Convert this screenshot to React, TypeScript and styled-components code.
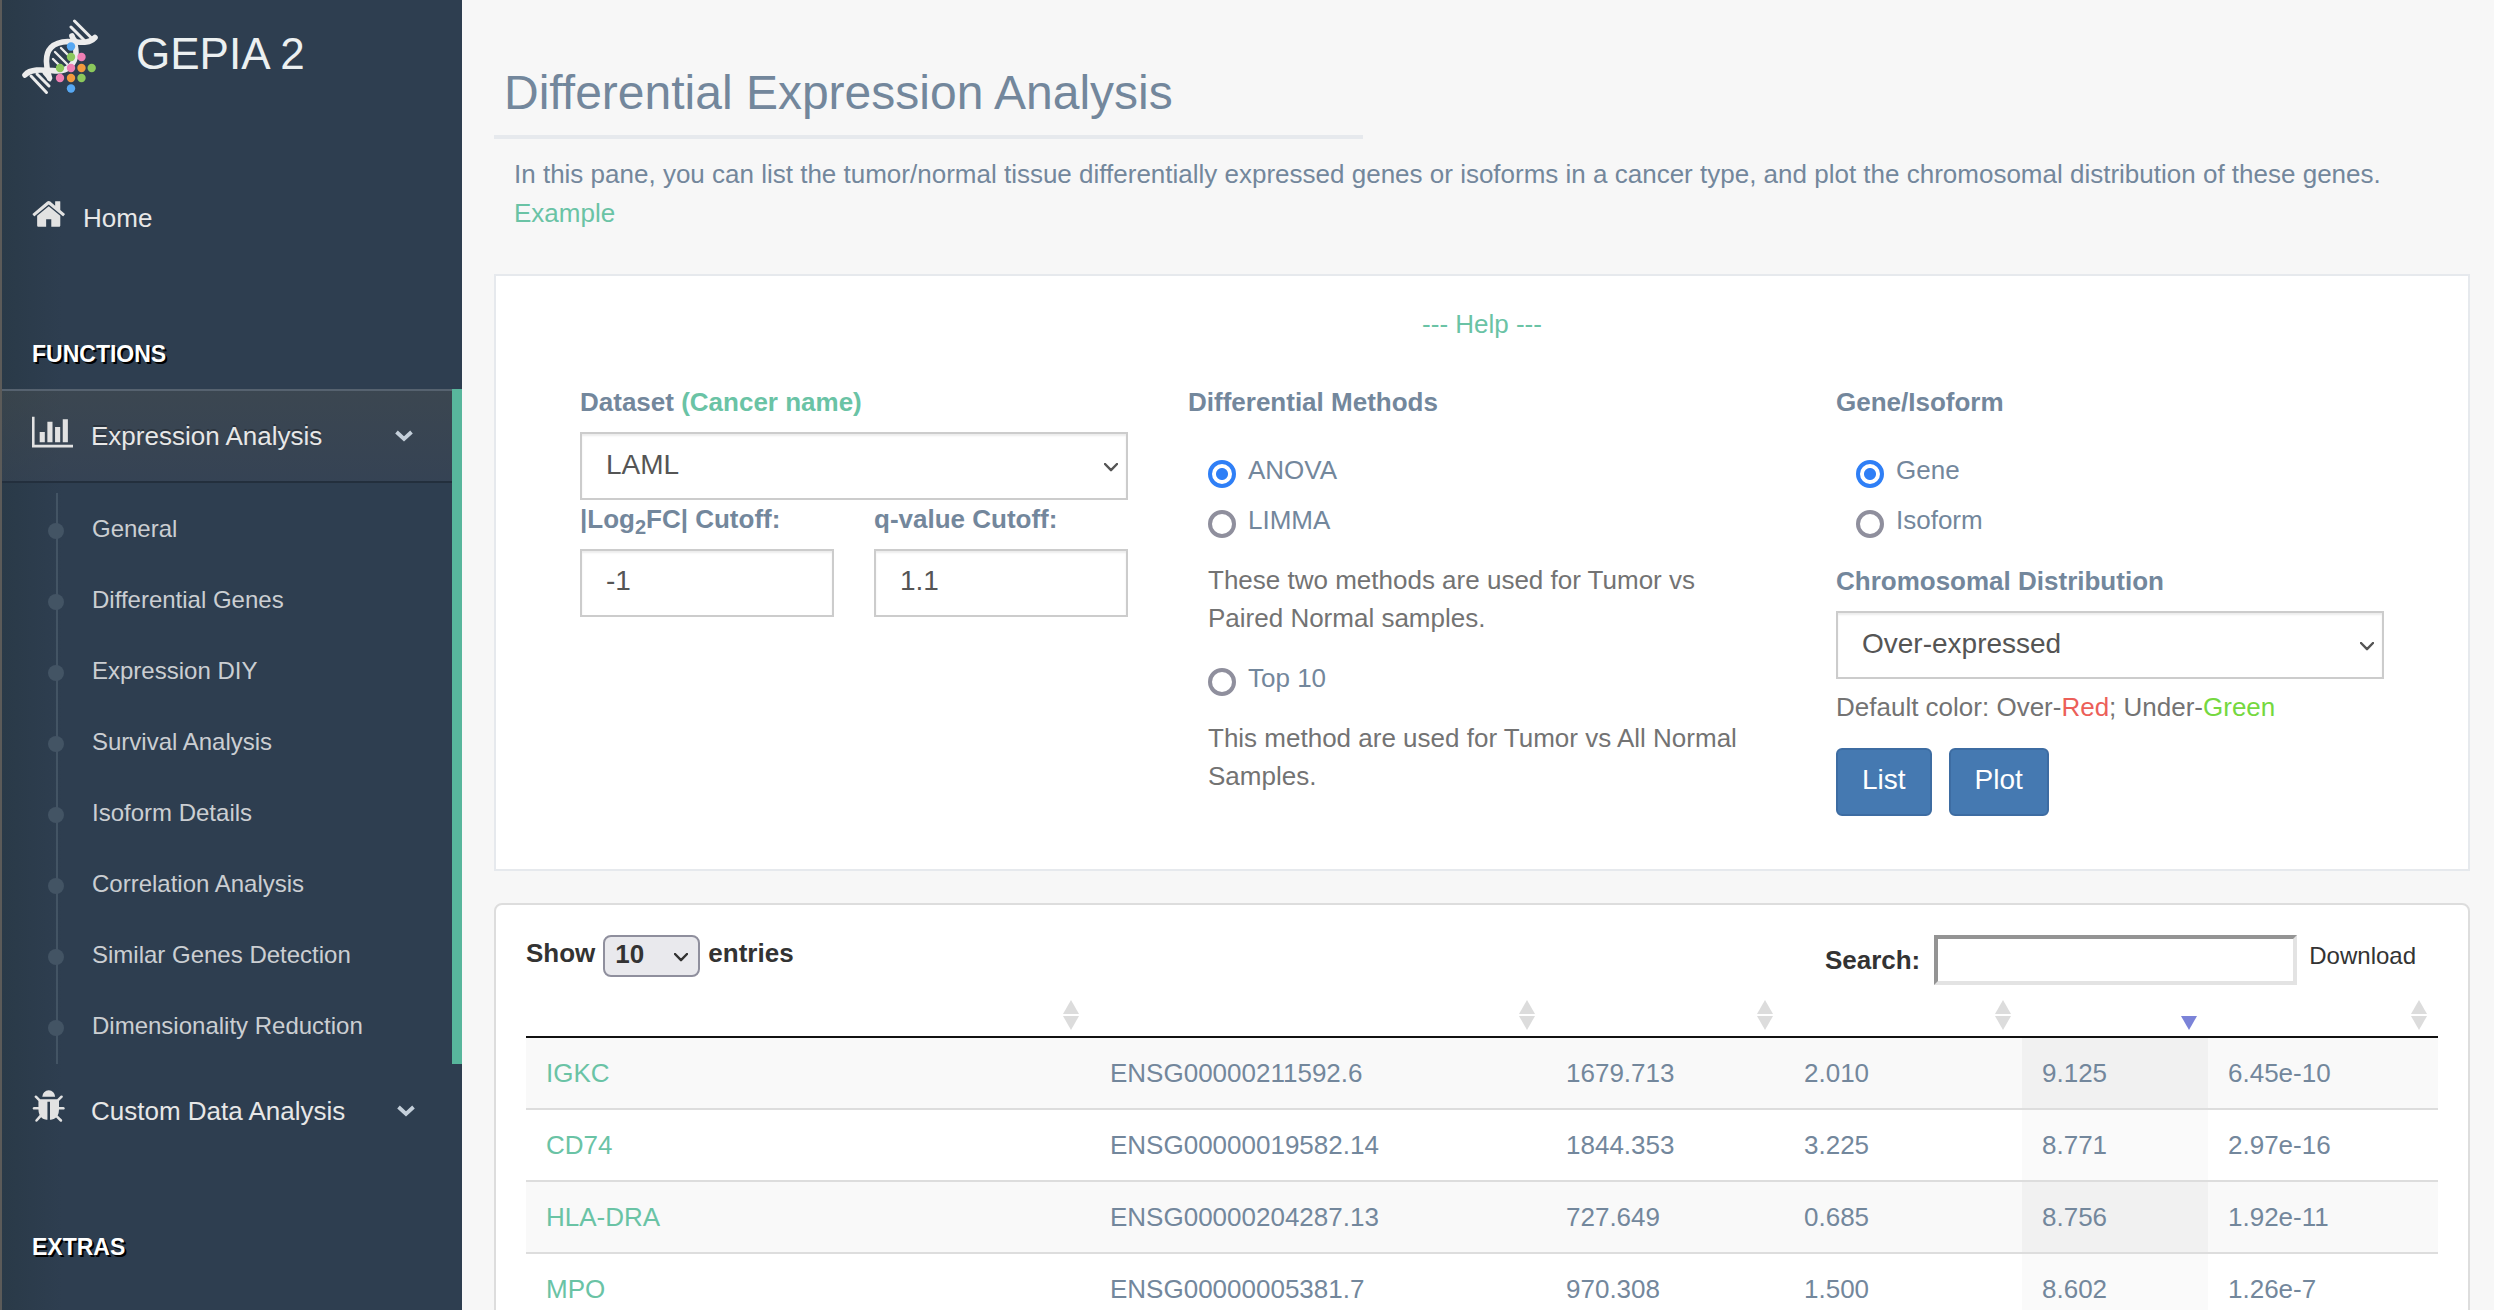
import React, { useState } from "react";
import styled, { createGlobalStyle } from "styled-components";

const color = {
  page: "#f7f7f7",
  sidebar: "#2e3e50",
  text: "#73879c",
  dark: "#333333",
  field: "#555555",
  muted: "#737373",
  green: "#6ac3a5",
  accent: "#58b69c",
  line: "#e6e9ed",
};

const GlobalStyle = createGlobalStyle`
  *, *::before, *::after { box-sizing: border-box; }
  body {
    margin: 0;
    background: ${color.page};
    color: ${color.text};
    font-family: "Liberation Sans", Arial, Helvetica, sans-serif;
    font-size: 26px;
    line-height: 38px;
  }
  button, input, select { font-family: inherit; }
  a { color: ${color.green}; text-decoration: none; }
`;

const Shell = styled.div`
  display: flex;
  height: 100vh;
  overflow: hidden;
`;

/* ---------- sidebar ---------- */

const Sidebar = styled.aside`
  flex: 0 0 462px;
  border-left: 2px solid #5c5b59;
  background: linear-gradient(90deg, #2a3a48, ${color.sidebar} 60px);
`;

const Brand = styled.a`
  display: flex;
  align-items: flex-start;
  gap: 38px;
  height: 171px;
  padding: 19px 20px;
  color: #ecf0f1;
  font-size: 44px;
  line-height: 70px;
`;

const SectionTitle = styled.h3`
  margin: 72px 0 18px;
  padding-left: 30px;
  color: #fff;
  font-size: 23px;
  line-height: 34px;
  text-transform: uppercase;
  text-shadow: 2px 2px 0 #000;
`;

const Menu = styled.ul`
  margin: 0;
  padding: 0;
  list-style: none;
`;

const MenuItem = styled.li<{ $active?: boolean }>`
  border-right: ${(p) => (p.$active ? `10px solid ${color.accent}` : "none")};
`;

const MenuLink = styled.a<{ $active?: boolean; $slot: number; $end?: number }>`
  display: flex;
  align-items: center;
  height: 94px;
  padding: 0 ${(p) => p.$end ?? 39}px 0 30px;
  color: #e7e7e7;
  text-shadow: ${(p) => (p.$active ? "0 -2px 0 rgba(0, 0, 0, 0.25)" : "none")};
  background: ${(p) =>
    p.$active ? "linear-gradient(rgba(84, 86, 82, 0.35), rgba(67, 76, 92, 0.35))" : "none"};
  border: solid transparent;
  border-width: 2px 0;
  border-color: ${(p) => (p.$active ? "#56626f transparent #232f3d" : "transparent")};

  > svg:first-child {
    flex: none;
    margin: 0 calc(${(p) => p.$slot}px - var(--icon-width)) 8px 0;
  }
  > span { flex: 1; }
`;

const SubMenu = styled.ul`
  margin: 10px 0 0;
  padding: 0 0 3px 54px;
  list-style: none;
  background: linear-gradient(#435464, #435464) 54px 0 / 2px 100% no-repeat;
`;

const SubItem = styled.li`
  display: flex;
  align-items: center;
  height: 71px;

  &::before {
    content: "";
    width: 16px;
    height: 16px;
    margin: 5px 28px 0 -8px;
    border-radius: 50%;
    background: #435464;
  }
  a {
    color: #cbced2;
    font-size: 24px;
  }
`;

/* ---------- main column ---------- */

const Main = styled.main`
  flex: 1;
  min-width: 0;
  padding: 64px 24px 0 32px;
`;

const Title = styled.h2`
  width: 44%;
  margin: 0 0 16px;
  padding: 0 10px 13px;
  border-bottom: 4px solid ${color.line};
  font-size: 48px;
  font-weight: 400;
  line-height: 58px;
  white-space: nowrap;
`;

const Intro = styled.p`
  margin: 0 0 41px;
  padding: 0 20px;
  line-height: 39px;
`;

const Panel = styled.section`
  padding: 29px 84px 53px;
  border: 2px solid ${color.line};
  background: #fff;
`;

const HelpLink = styled.a`
  display: block;
  margin-bottom: 41px;
  text-align: center;
`;

const FormGrid = styled.form`
  display: grid;
  grid-template-columns: 548fr 588fr 548fr;
  gap: 60px;
  align-items: start;
`;

const labelText = `
  display: block;
  margin-bottom: 12px;
  font-weight: 700;
  font-size: 26px;
  line-height: 36px;
`;

const Label = styled.label`
  ${labelText}
  sub {
    font-size: 20px;
    line-height: 0;
    vertical-align: baseline;
    position: relative;
    bottom: -6px;
  }
`;

const Fieldset = styled.fieldset`
  min-width: 0;
  margin: 0;
  padding: 0;
  border: 0;
`;

const Legend = styled.legend`
  ${labelText}
  margin-bottom: 31px;
  padding: 0;
`;

const Pair = styled.div`
  display: grid;
  grid-template-columns: 1fr 1fr;
  gap: 40px;
  padding-top: 1px;
`;

const fieldBox = `
  width: 100%;
  height: 68px;
  padding: 0 24px 4px;
  border: 2px solid #ccc;
  border-radius: 0;
  background: #fff;
  box-shadow: inset 0 2px 2px rgba(0, 0, 0, 0.075);
  color: ${color.field};
  font-size: 28px;
`;

const TextField = styled.input`
  ${fieldBox}
  display: block;
`;

const SelectWrap = styled.span<{ $inset: number }>`
  position: relative;
  display: block;

  > svg {
    position: absolute;
    top: calc(50% - 3px);
    right: ${(p) => p.$inset}px;
    pointer-events: none;
  }
`;

const SelectField = styled.select`
  ${fieldBox}
  display: block;
  appearance: none;
`;

const Options = styled.div`
  display: flex;
  flex-direction: column;
  gap: 12px;
  padding-left: 20px;
`;

const Option = styled.label`
  display: flex;
  align-items: flex-start;
  gap: 12px;
`;

const Radio = styled.input`
  appearance: none;
  flex: none;
  width: 28px;
  height: 28px;
  margin: 9px 0 0;
  border: 4px solid #8f8f9d;
  border-radius: 50%;
  background: #fff;

  &:checked {
    border-color: #2f7ff6;
    background: radial-gradient(circle, #2f7ff6 5.5px, #fff 6.5px);
  }
`;

const Note = styled.p`
  margin: 10px 0;
  color: ${color.muted};
`;

const Chromosomal = styled.div`
  margin-top: 24px;
`;

const ColorHint = styled.p`
  margin: 9px 0 22px;
  color: ${color.muted};
`;

const Tint = styled.span<{ $tint: string }>`
  color: ${(p) => p.$tint};
`;

const Buttons = styled.div`
  display: flex;
  gap: 17px;
`;

const Button = styled.button`
  height: 68px;
  padding: 0 24px 4px;
  border: 2px solid #3d6ca2;
  border-radius: 6px;
  background: #4579b1;
  color: #fff;
  font-size: 28px;
`;

/* ---------- results ---------- */

const Results = styled.section`
  margin-top: 32px;
  padding: 30px;
  border: 2px solid #ddd;
  border-radius: 8px;
  background: #fff;
`;

const Toolbar = styled.div`
  display: flex;
  align-items: flex-start;
  color: ${color.dark};
`;

const Entries = styled.label`
  display: flex;
  align-items: flex-start;
  gap: 8px;
  font-weight: 700;
  line-height: 36px;
`;

const EntriesSelect = styled.select`
  display: block;
  appearance: none;
  width: 97px;
  height: 42px;
  padding: 0 10px 5px;
  border: 2px solid #8f8f9d;
  border-radius: 8px;
  background: #e9e9ed;
  color: ${color.dark};
  font-size: 26px;
  font-weight: 700;
`;

const Search = styled.label`
  display: flex;
  gap: 14px;
  margin-left: auto;
  font-weight: 700;
  line-height: 50px;
`;

const SearchInput = styled.input`
  width: 363px;
  height: 50px;
  padding: 0 4px;
  border: 4px solid;
  border-color: #949494 #e3e3e3 #e3e3e3 #949494;
  background: #fff;
  font-size: 26px;
`;

const Download = styled.a`
  margin: 0 22px 0 12px;
  color: ${color.dark};
  font-size: 24px;
  line-height: 42px;
`;

const Table = styled.table`
  width: 100%;
  table-layout: fixed;
  border-collapse: separate;
  border-spacing: 0;
`;

const HeadCell = styled.th`
  padding: 15px 11px 6px;
  border-bottom: 2px solid #111;
`;

const SortButton = styled.button`
  display: block;
  margin-left: auto;
  padding: 0;
  border: 0;
  background: none;

  svg { display: block; }
`;

const Cell = styled.td<{ $sorted?: boolean }>`
  height: 72px;
  padding: 0 20px;
  border-bottom: 2px solid #ddd;
  background: ${(p) => (p.$sorted ? "#fafafa" : "#fff")};

  tr:nth-child(odd) > & {
    background: ${(p) => (p.$sorted ? "#f1f1f1" : "#f9f9f9")};
  }
`;

/* ---------- drawings ---------- */

const Logo = () => (
  <svg width="76" height="76" viewBox="8 9 76 76" fill="none" aria-hidden="true">
    <g stroke="#ececec" strokeLinecap="round">
      <path strokeWidth="5.600" d="M81 27.500C74 35 65 31.500 54 31.500C38 32 32 40 32.500 52C32.500 60 34 64 35.500 68" />
      <path strokeWidth="5.600" d="M11 65C17 58 30 60 43 61C54 61 61 54 62 43C62 35 60 31 58 26" />
      <path strokeWidth="3" d="M60.500 11L77 27.500M57 17L71 31M57 25L63 31" />
      <path strokeWidth="3" d="M17 66L32.500 82.500M23 64L35 76M30 63L36 70" />
      <path strokeWidth="2.400" d="M39 49L49 59M41 42L53 54M47 38L57 48" />
    </g>
    {[
      [57, 36.5, "#57a8f2"], [57, 47, "#8bc85c"], [67.5, 47, "#f07fb4"],
      [46, 58, "#8bc85c"], [57, 58, "#f07fb4"], [67.5, 58, "#f29a3e"], [77.7, 58, "#8bc85c"],
      [46, 68, "#f07fb4"], [57, 68, "#f29a3e"], [67.5, 68, "#8bc85c"], [57, 78.5, "#57a8f2"],
    ].map(([x, y, fill], i) => (
      <circle key={i} cx={x} cy={y} r="4.200" fill={fill as string} />
    ))}
  </svg>
);

const GlyphSvg = styled.svg<{ $w: number }>`
  --icon-width: ${(p) => p.$w}px;
  width: ${(p) => p.$w}px;
  height: 36px;
  fill: #e2e2e2;
`;

const HomeGlyph = () => (
  <GlyphSvg $w={36} viewBox="64 0 1792 1792" aria-hidden="true">
    <path d="M1472 992v480q0 26-19 45t-45 19h-384v-384h-256v384h-384q-26 0-45-19t-19-45v-480q0-1 .5-3t.5-3l575-474 575 474q1 2 1 6zm223-69l-62 74q-8 9-21 11h-3q-13 0-21-7l-692-577-692 577q-12 8-24 7-13-2-21-11l-62-74q-8-10-7-23.500t11-21.500l719-599q32-26 76-26t76 26l244 204v-195q0-14 9-23t23-9h192q14 0 23 9t9 23v408l219 182q10 8 11 21.500t-7 23.500z" />
  </GlyphSvg>
);

const ChartGlyph = () => (
  <GlyphSvg $w={41} viewBox="0 0 2048 1792" aria-hidden="true">
    <path d="M640 896v512h-256v-512h256zm384-512v1024h-256v-1024h256zm1024 1152v128h-2048v-1536h128v1408h1920zm-640-896v768h-256v-768h256zm384-384v1152h-256v-1152h256z" />
  </GlyphSvg>
);

const BugGlyph = () => (
  <GlyphSvg $w={36} viewBox="64 0 1792 1792" aria-hidden="true">
    <path d="M1696 960q0 26-19 45t-45 19h-224q0 171-67 290l208 209q19 19 19 45t-19 45q-18 19-45 19t-45-19l-198-197q-5 5-15 13t-42 28.500-65 36.500-82 29-97 13v-896h-128v896q-51 0-101.500-13.500t-87-33-66-39-43.500-32.500l-15-14-183 207q-20 21-48 21-24 0-43-16-19-18-20.500-44.500t15.500-46.500l202-227q-58-114-58-274h-224q-26 0-45-19t-19-45 19-45 45-19h224v-294l-173-173q-19-19-19-45t19-45 45-19 45 19l173 173h844l173-173q19-19 45-19t45 19 19 45-19 45l-173 173v294h224q26 0 45 19t19 45zm-480-576h-640q0-133 93.500-226.500t226.500-93.500 226.500 93.500 93.500 226.500z" />
  </GlyphSvg>
);

const MenuChevron = () => (
  <svg width="18" height="12" viewBox="0 0 18 12" aria-hidden="true">
    <path d="M1.500 2L9 9L16.500 2" fill="none" stroke="#c4cfda" strokeWidth="3.800" />
  </svg>
);

const SelectChevron = ({ stroke }: { stroke: string }) => (
  <svg width="14" height="9" viewBox="0 0 14 9" aria-hidden="true">
    <path d="M1 1L7 7.200L13 1" fill="none" stroke={stroke} strokeWidth="2.400" strokeLinecap="round" strokeLinejoin="round" />
  </svg>
);

const SortGlyph = ({ sorted }: { sorted?: boolean }) => (
  <svg width="16" height="30" viewBox="0 0 16 30" aria-hidden="true">
    {!sorted && <path d="M8 0L16 14H0Z" fill="#dcdcdc" />}
    <path d="M0 16H16L8 30Z" fill={sorted ? "#7b83d8" : "#dcdcdc"} />
  </svg>
);

/* ---------- data ---------- */

const functions = [
  "General",
  "Differential Genes",
  "Expression DIY",
  "Survival Analysis",
  "Isoform Details",
  "Correlation Analysis",
  "Similar Genes Detection",
  "Dimensionality Reduction",
];

const columns = [
  { name: "Gene Symbol", width: 564 },
  { name: "Gene ID", width: 456 },
  { name: "Median (Tumor)", width: 238 },
  { name: "Median (Normal)", width: 238 },
  { name: "Log2(Fold Change)", width: 186 },
  { name: "adjp", width: 230 },
];

const SORTED = 4;

const rows = [
  ["IGKC", "ENSG00000211592.6", "1679.713", "2.010", "9.125", "6.45e-10"],
  ["CD74", "ENSG00000019582.14", "1844.353", "3.225", "8.771", "2.97e-16"],
  ["HLA-DRA", "ENSG00000204287.13", "727.649", "0.685", "8.756", "1.92e-11"],
  ["MPO", "ENSG00000005381.7", "970.308", "1.500", "8.602", "1.26e-7"],
];

export default function App() {
  const [method, setMethod] = useState("ANOVA");
  const [level, setLevel] = useState("Gene");

  const methodOption = (name: string) => (
    <Option>
      <Radio type="radio" name="method" checked={method === name} onChange={() => setMethod(name)} />
      {name}
    </Option>
  );
  const levelOption = (name: string) => (
    <Option>
      <Radio type="radio" name="level" checked={level === name} onChange={() => setLevel(name)} />
      {name}
    </Option>
  );

  return (
    <Shell>
      <GlobalStyle />
      <Sidebar>
        <Brand href="#">
          <Logo />
          <span>GEPIA 2</span>
        </Brand>
        <nav>
          <Menu>
            <MenuItem>
              <MenuLink href="#" $slot={51}>
                <HomeGlyph />
                <span>Home</span>
              </MenuLink>
            </MenuItem>
          </Menu>
          <SectionTitle>Functions</SectionTitle>
          <Menu>
            <MenuItem $active>
              <MenuLink href="#" $active $slot={59}>
                <ChartGlyph />
                <span>Expression Analysis</span>
                <MenuChevron />
              </MenuLink>
              <SubMenu>
                {functions.map((name) => (
                  <SubItem key={name}>
                    <a href="#">{name}</a>
                  </SubItem>
                ))}
              </SubMenu>
            </MenuItem>
            <MenuItem>
              <MenuLink href="#" $slot={59} $end={47}>
                <BugGlyph />
                <span>Custom Data Analysis</span>
                <MenuChevron />
              </MenuLink>
            </MenuItem>
          </Menu>
          <SectionTitle>Extras</SectionTitle>
        </nav>
      </Sidebar>

      <Main>
        <Title>Differential Expression Analysis</Title>
        <Intro>
          In this pane, you can list the tumor/normal tissue differentially expressed genes or
          isoforms in a cancer type, and plot the chromosomal distribution of these genes.{" "}
          <a href="#">Example</a>
        </Intro>

        <Panel>
          <HelpLink href="#">--- Help ---</HelpLink>
          <FormGrid onSubmit={(e) => e.preventDefault()}>
            <div>
              <Label htmlFor="dataset">
                Dataset <a href="#">(Cancer name)</a>
              </Label>
              <SelectWrap $inset={10}>
                <SelectField id="dataset" defaultValue="LAML">
                  <option>LAML</option>
                </SelectField>
                <SelectChevron stroke={color.field} />
              </SelectWrap>
              <Pair>
                <div>
                  <Label htmlFor="fc">
                    |Log<sub>2</sub>FC| Cutoff:
                  </Label>
                  <TextField id="fc" defaultValue="-1" />
                </div>
                <div>
                  <Label htmlFor="qvalue">q-value Cutoff:</Label>
                  <TextField id="qvalue" defaultValue="1.1" />
                </div>
              </Pair>
            </div>

            <Fieldset>
              <Legend>Differential Methods</Legend>
              <Options>
                {methodOption("ANOVA")}
                {methodOption("LIMMA")}
                <Note>These two methods are used for Tumor vs Paired Normal samples.</Note>
                {methodOption("Top 10")}
                <Note>This method are used for Tumor vs All Normal Samples.</Note>
              </Options>
            </Fieldset>

            <div>
              <Fieldset>
                <Legend>Gene/Isoform</Legend>
                <Options>
                  {levelOption("Gene")}
                  {levelOption("Isoform")}
                </Options>
              </Fieldset>
              <Chromosomal>
                <Label htmlFor="distribution">Chromosomal Distribution</Label>
                <SelectWrap $inset={10}>
                  <SelectField id="distribution" defaultValue="Over-expressed">
                    <option>Over-expressed</option>
                    <option>Under-expressed</option>
                  </SelectField>
                  <SelectChevron stroke={color.field} />
                </SelectWrap>
                <ColorHint>
                  Default color: Over-<Tint $tint="#ec5f59">Red</Tint>; Under-
                  <Tint $tint="#75d83f">Green</Tint>
                </ColorHint>
                <Buttons>
                  <Button type="button">List</Button>
                  <Button type="button">Plot</Button>
                </Buttons>
              </Chromosomal>
            </div>
          </FormGrid>
        </Panel>

        <Results>
          <Toolbar>
            <Entries>
              Show
              <SelectWrap $inset={12}>
                <EntriesSelect defaultValue="10">
                  <option>10</option>
                  <option>25</option>
                  <option>50</option>
                </EntriesSelect>
                <SelectChevron stroke={color.dark} />
              </SelectWrap>
              entries
            </Entries>
            <Search>
              Search:
              <SearchInput type="text" />
            </Search>
            <Download href="#">Download</Download>
          </Toolbar>
          <Table>
            <colgroup>
              {columns.map((c) => (
                <col key={c.name} style={{ width: c.width }} />
              ))}
            </colgroup>
            <thead>
              <tr>
                {columns.map((c, i) => (
                  <HeadCell key={c.name} scope="col">
                    <SortButton type="button" aria-label={`Sort by ${c.name}`}>
                      <SortGlyph sorted={i === SORTED} />
                    </SortButton>
                  </HeadCell>
                ))}
              </tr>
            </thead>
            <tbody>
              {rows.map((row) => (
                <tr key={row[0]}>
                  {row.map((value, i) => (
                    <Cell key={i} $sorted={i === SORTED}>
                      {i === 0 ? <a href="#">{value}</a> : value}
                    </Cell>
                  ))}
                </tr>
              ))}
            </tbody>
          </Table>
        </Results>
      </Main>
    </Shell>
  );
}
